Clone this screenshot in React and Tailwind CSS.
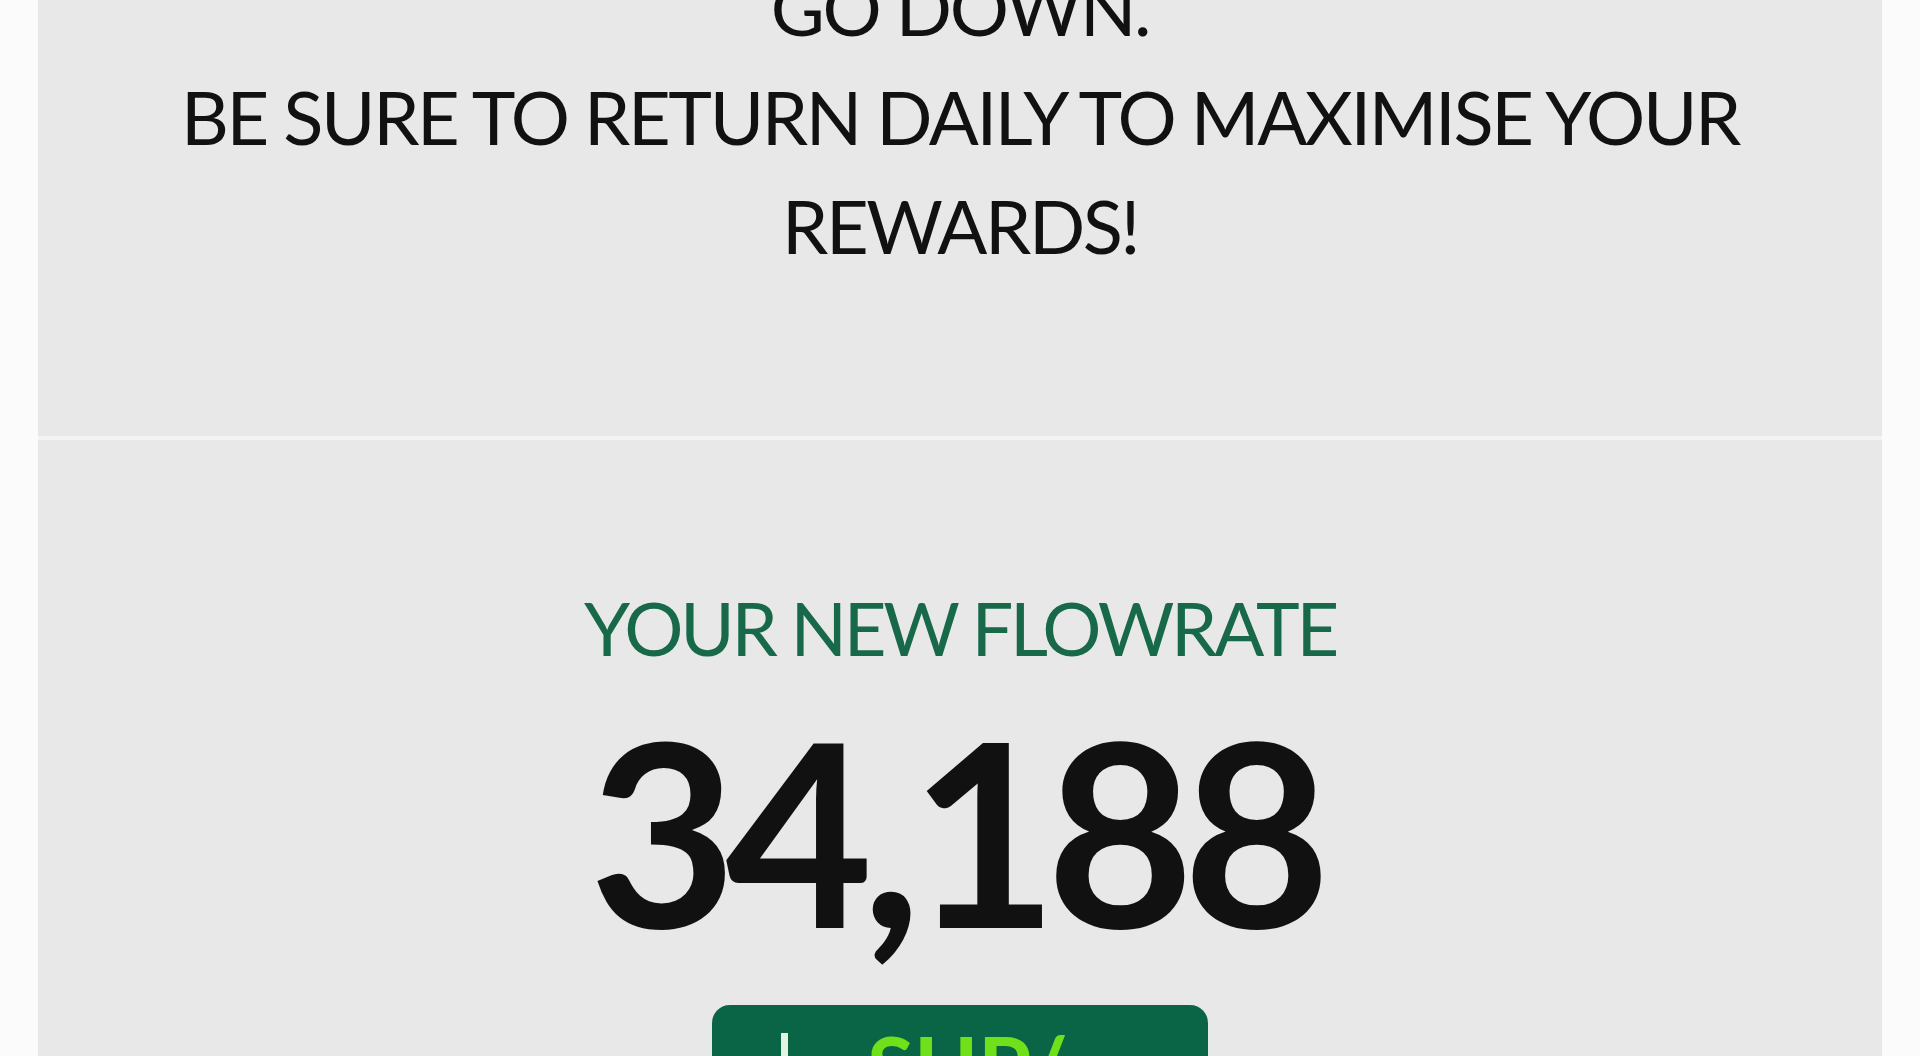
export default function App() {
  return (
    <div className="h-[1056px] w-[1920px] overflow-hidden bg-[#fbfbfb] px-[38px]" style={{ fontFamily: "Lato, 'Open Sans', sans-serif" }}>
      <div className="flex h-full flex-col bg-[#e8e8e8]">
        <div className="flex h-[436px] shrink-0 flex-col items-center overflow-hidden">
          <div className="-mt-[47px] text-center text-[74px] font-normal uppercase leading-[109px] tracking-[-2.4px] text-[#111]">
            <div>GO DOWN.</div>
            <div>BE SURE TO RETURN DAILY TO MAXIMISE YOUR</div>
            <div>REWARDS!</div>
          </div>
        </div>
        <div className="h-[4px] shrink-0 bg-[#f3f3f3]" />
        <div className="flex flex-1 flex-col items-center pt-[151px]">
          <div className="text-[74px] font-normal uppercase leading-none tracking-[-3.2px] text-[#17694a]">YOUR NEW FLOWRATE</div>
          <div className="mt-[37px] mr-[12px] text-[255px] font-bold leading-none tracking-[-11.5px] text-[#111]">34,188</div>
          <div className="mt-[48px] flex h-[120px] w-[496px] shrink-0 items-start gap-[79px] rounded-[18px] bg-[#0a6446] pl-[69px] pt-[28px]">
            <div className="h-[60px] w-[7px] bg-[#e3f5e0]" />
            <div className="-mt-[10px] text-[86px] font-bold leading-none text-[#6fe01a]">SUP/</div>
          </div>
        </div>
      </div>
    </div>
  );
}
